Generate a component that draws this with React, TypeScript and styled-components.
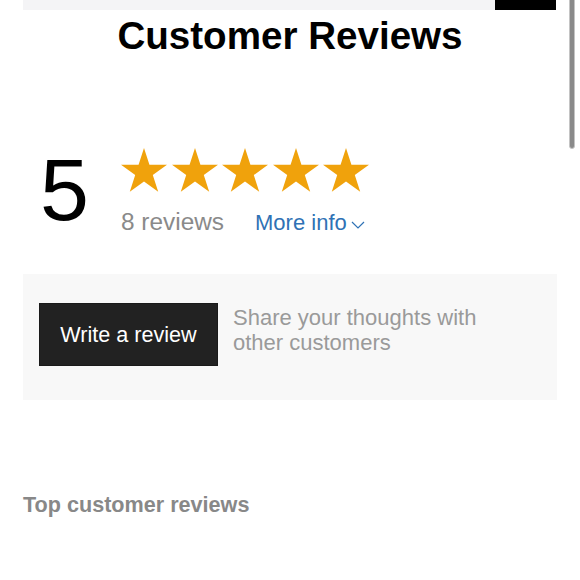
import React from "react";
import styled, { createGlobalStyle } from "styled-components";

const GlobalStyle = createGlobalStyle`
    body {
        margin: 0;
        background: #ffffff;
        font-family: "Liberation Sans", Arial, Helvetica, sans-serif;
        overflow: hidden;
    }
`;

const STAR_POINTS =
    "23,0 28.43,16.7 46,16.71 31.79,27.04 37.21,43.74 23,33.42 8.79,43.74 14.21,27.04 0,16.71 17.57,16.7";

const Star = () => (
    <svg width="46" height="44" viewBox="0 0 46 44" style={{ display: "block" }}>
        <polygon points={STAR_POINTS} fill="#f0a20c" />
    </svg>
);

const Chevron = () => (
    <svg width="14" height="8" viewBox="0 0 14 8" style={{ display: "block" }}>
        <polyline points="1,1 7,7 13,1" fill="none" stroke="#2f72b5" strokeWidth="1.2" />
    </svg>
);

const App = () => {
    const rating = 5;
    const reviewCount = 8;

    return (
        <StyledPage>
            <GlobalStyle />
            <TopBar>
                <SearchStub />
                <SearchButton />
            </TopBar>

            <Title>Customer Reviews</Title>

            <RatingRow>
                <Score>{rating}</Score>
                <RatingDetails>
                    <Stars>
                        {Array.from({ length: rating }).map((_, i) => (
                            <Star key={i} />
                        ))}
                    </Stars>
                    <Meta>
                        <ReviewCount>{`${reviewCount} reviews`}</ReviewCount>
                        <MoreInfo>
                            More info
                            <Chevron />
                        </MoreInfo>
                    </Meta>
                </RatingDetails>
            </RatingRow>

            <WritePanel>
                <WriteButton>Write a review</WriteButton>
                <WriteHint>
                    Share your thoughts with
                    <br />
                    other customers
                </WriteHint>
            </WritePanel>

            <SectionHeading>Top customer reviews</SectionHeading>

            <ScrollThumb />
        </StyledPage>
    );
};

const StyledPage = styled.div`
    padding: 0 23px;
    height: 580px;
    box-sizing: border-box;
`;

const TopBar = styled.div`
    display: flex;
    height: 10px;
    margin-right: 1px;
`;

const SearchStub = styled.div`
    flex: 1;
    background-color: #f4f4f6;
`;

const SearchButton = styled.div`
    width: 61px;
    background-color: #000000;
`;

const Title = styled.h1`
    margin: 4px 0 0;
    font-size: 38.6px;
    line-height: 44px;
    font-weight: 700;
    text-align: center;
    color: #000000;
`;

const RatingRow = styled.div`
    display: flex;
    align-items: flex-start;
    margin-top: 88px;
    padding-left: 17px;
`;

const Score = styled.div`
    font-size: 88px;
    line-height: 88px;
    color: #000000;
    width: 49px;
    margin-right: 32px;
`;

const RatingDetails = styled.div`
    display: flex;
    flex-direction: column;
    margin-top: 2px;
`;

const Stars = styled.div`
    display: flex;
    gap: 4.5px;
`;

const Meta = styled.div`
    display: flex;
    align-items: baseline;
    gap: 31px;
    margin-top: 16px;
`;

const ReviewCount = styled.span`
    font-size: 24.4px;
    line-height: 28px;
    color: #8a8a8a;
`;

const MoreInfo = styled.span`
    display: inline-flex;
    align-items: center;
    gap: 4px;
    font-size: 22px;
    line-height: 28px;
    color: #2f72b5;
    cursor: pointer;

    svg {
        margin-top: 3px;
    }
`;

const WritePanel = styled.div`
    display: flex;
    align-items: flex-start;
    gap: 15px;
    margin-top: 37px;
    padding: 29px 16px 34px;
    background-color: #f8f8f8;
`;

const WriteButton = styled.button`
    width: 179px;
    height: 63px;
    border: 1px solid #1a1a1a;
    background-color: #222222;
    color: #ffffff;
    font-family: inherit;
    font-size: 21.6px;
    padding: 0;
    cursor: pointer;
`;

const WriteHint = styled.div`
    margin-top: 2px;
    font-size: 22px;
    line-height: 25px;
    color: #9a9a9a;
`;

const SectionHeading = styled.h2`
    margin: 93px 0 0;
    font-size: 21.6px;
    line-height: 24px;
    font-weight: 700;
    color: #888888;
`;

const ScrollThumb = styled.div`
    position: fixed;
    top: -4px;
    right: 5px;
    width: 4px;
    height: 151px;
    border-radius: 3px;
    background-color: #8a8a8a;
    border: 1px solid #c4c4c4;
`;

export default App;
